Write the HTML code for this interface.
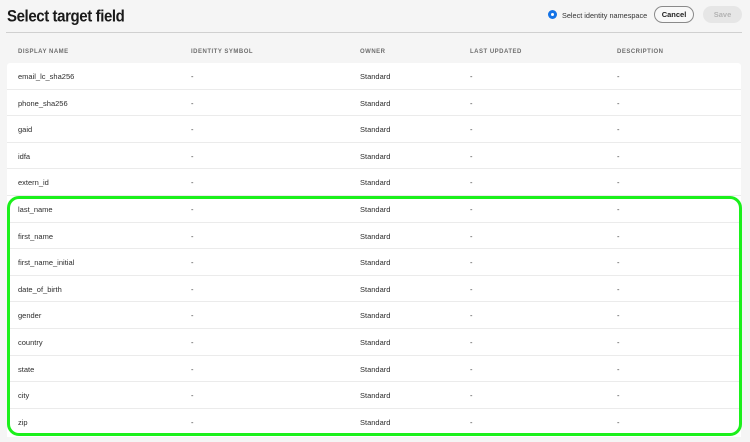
<!DOCTYPE html>
<html><head><style>
body{margin:0;width:750px;height:442px;background:#f5f5f5;font-family:"Liberation Sans",sans-serif;overflow:hidden;position:relative;color:#2c2c2c}
h1{position:absolute;left:7px;top:7px;margin:0;font-size:15px;font-weight:bold;color:#1a1a1a;letter-spacing:-0.4px;transform:scaleY(1.1);transform-origin:top left}
.div{position:absolute;left:6px;top:32px;width:736px;height:1px;background:#d0d0d0}
.hdr{position:absolute;top:49px;font-size:6px;font-weight:bold;color:#6e6e6e;letter-spacing:0.5px}
.tbl{position:absolute;left:7px;top:63px;width:734px;height:379px;background:#fff;border-radius:3px}
.row{position:absolute;left:7px;width:734px;height:26.6px;border-bottom:1px solid #ebebeb;font-size:7.5px;box-sizing:border-box}
.row span{position:absolute;top:9px}
.green{position:absolute;left:7px;top:196px;width:735px;height:240px;border:3px solid #1bf01b;border-radius:12px;box-sizing:border-box}
.radio{position:absolute;left:548px;top:10px;width:9px;height:9px;border-radius:50%;background:#1473e6;box-sizing:border-box}
.radio:after{content:"";position:absolute;left:3px;top:3px;width:3px;height:3px;border-radius:50%;background:#fff}
.btn{position:absolute;top:6px;height:17px;border-radius:9px;font-size:7.5px;font-weight:bold;text-align:center;line-height:17px;box-sizing:border-box}
</style></head><body>
<h1>Select target field</h1>
<div class="radio"></div>
<div style="position:absolute;left:562px;top:11px;font-size:7.3px;color:#333">Select identity namespace</div>
<div class="btn" style="left:654px;width:40px;border:1px solid #8a8a8a;color:#222;background:#f8f8f8;line-height:15px">Cancel</div>
<div class="btn" style="left:703px;width:39px;background:#e6e6e6;color:#b3b3b3">Save</div>
<div class="div"></div>
<div class="hdr" style="left:18px">DISPLAY NAME</div>
<div class="hdr" style="left:191px">IDENTITY SYMBOL</div>
<div class="hdr" style="left:360px">OWNER</div>
<div class="hdr" style="left:470px">LAST UPDATED</div>
<div class="hdr" style="left:617px">DESCRIPTION</div>
<div class="tbl"></div>
<div class="row" style="top:63px"><span style="left:11px">email_lc_sha256</span><span style="left:184px">-</span><span style="left:353px">Standard</span><span style="left:463px">-</span><span style="left:610px">-</span></div>
<div class="row" style="top:89.6px"><span style="left:11px">phone_sha256</span><span style="left:184px">-</span><span style="left:353px">Standard</span><span style="left:463px">-</span><span style="left:610px">-</span></div>
<div class="row" style="top:116.2px"><span style="left:11px">gaid</span><span style="left:184px">-</span><span style="left:353px">Standard</span><span style="left:463px">-</span><span style="left:610px">-</span></div>
<div class="row" style="top:142.8px"><span style="left:11px">idfa</span><span style="left:184px">-</span><span style="left:353px">Standard</span><span style="left:463px">-</span><span style="left:610px">-</span></div>
<div class="row" style="top:169.4px"><span style="left:11px">extern_id</span><span style="left:184px">-</span><span style="left:353px">Standard</span><span style="left:463px">-</span><span style="left:610px">-</span></div>
<div class="row" style="top:196px"><span style="left:11px">last_name</span><span style="left:184px">-</span><span style="left:353px">Standard</span><span style="left:463px">-</span><span style="left:610px">-</span></div>
<div class="row" style="top:222.6px"><span style="left:11px">first_name</span><span style="left:184px">-</span><span style="left:353px">Standard</span><span style="left:463px">-</span><span style="left:610px">-</span></div>
<div class="row" style="top:249.2px"><span style="left:11px">first_name_initial</span><span style="left:184px">-</span><span style="left:353px">Standard</span><span style="left:463px">-</span><span style="left:610px">-</span></div>
<div class="row" style="top:275.8px"><span style="left:11px">date_of_birth</span><span style="left:184px">-</span><span style="left:353px">Standard</span><span style="left:463px">-</span><span style="left:610px">-</span></div>
<div class="row" style="top:302.4px"><span style="left:11px">gender</span><span style="left:184px">-</span><span style="left:353px">Standard</span><span style="left:463px">-</span><span style="left:610px">-</span></div>
<div class="row" style="top:329px"><span style="left:11px">country</span><span style="left:184px">-</span><span style="left:353px">Standard</span><span style="left:463px">-</span><span style="left:610px">-</span></div>
<div class="row" style="top:355.6px"><span style="left:11px">state</span><span style="left:184px">-</span><span style="left:353px">Standard</span><span style="left:463px">-</span><span style="left:610px">-</span></div>
<div class="row" style="top:382.2px"><span style="left:11px">city</span><span style="left:184px">-</span><span style="left:353px">Standard</span><span style="left:463px">-</span><span style="left:610px">-</span></div>
<div class="row" style="top:408.8px;border:none"><span style="left:11px">zip</span><span style="left:184px">-</span><span style="left:353px">Standard</span><span style="left:463px">-</span><span style="left:610px">-</span></div>
<div style="position:absolute;left:0;top:437px;width:750px;height:5px;background:#f5f5f5"></div>
<div class="green"></div>
</body></html>
